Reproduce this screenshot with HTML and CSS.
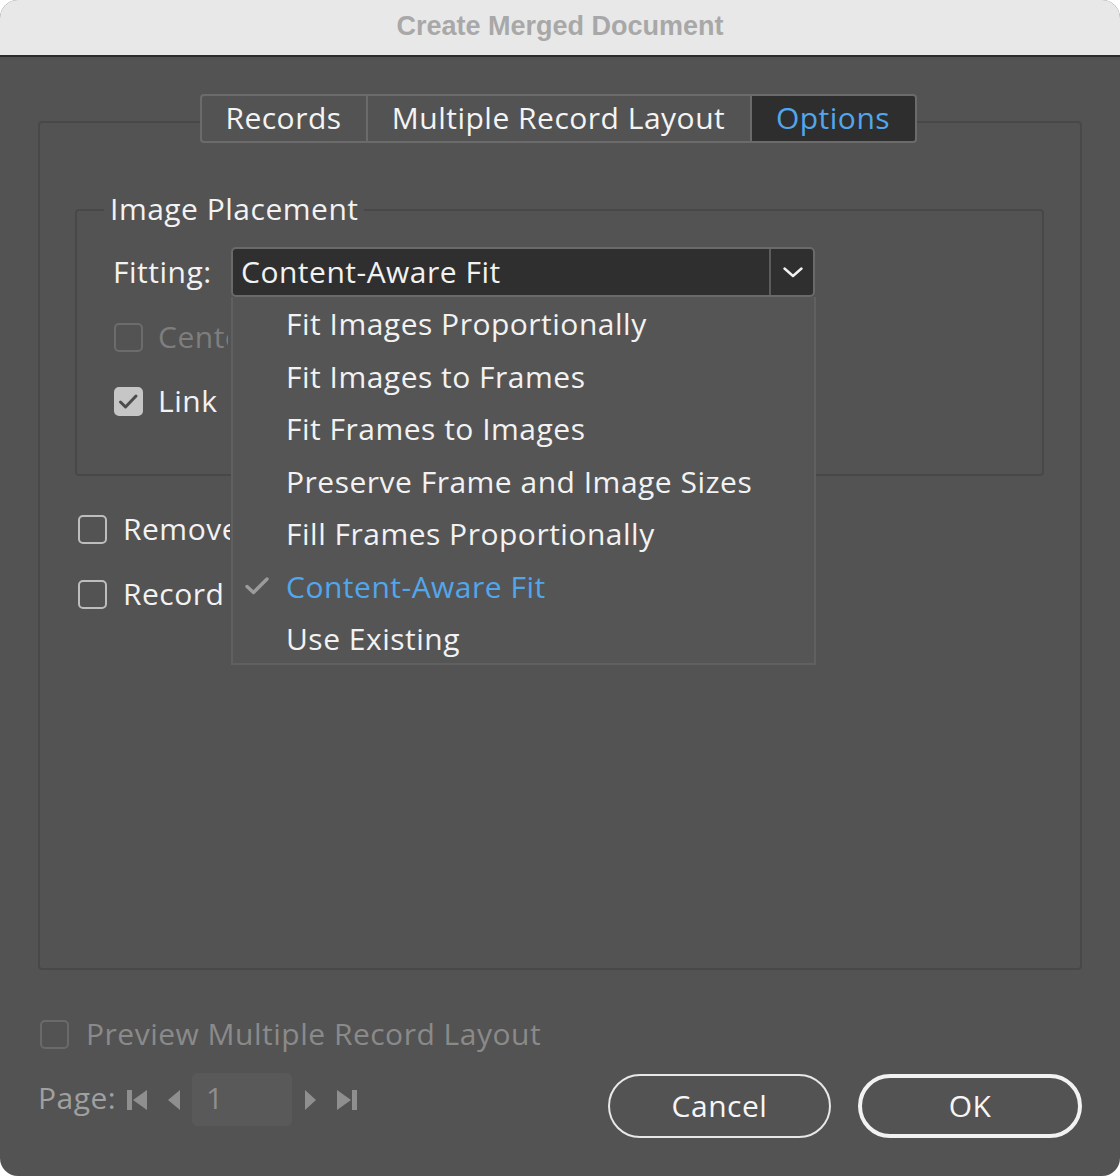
FILE: index.html
```html
<!DOCTYPE html>
<html>
<head>
<meta charset="utf-8">
<title>Create Merged Document</title>
<link rel="stylesheet" href="styles.css">
</head>
<body>
<div class="window">
  <div class="titlebar">Create Merged Document</div>
  <div class="content">
    <div class="panel">
      <div class="tabs">
        <div class="tab tab-records">Records</div>
        <div class="tab tab-layout">Multiple Record Layout</div>
        <div class="tab tab-options active">Options</div>
      </div>
      <div class="group">
        <div class="legend">Image Placement</div>
        <div class="fit-row">
          <span class="fit-label">Fitting:</span>
          <div class="select-wrap">
            <div class="select">
              <span class="select-value">Content-Aware Fit</span>
              <span class="select-arrow">
                <svg width="20" height="11" viewBox="0 0 20 11"><path d="M1.5 1.5 L10 9 L18.5 1.5" fill="none" stroke="#f2f2f2" stroke-width="2.4" stroke-linecap="round" stroke-linejoin="round"/></svg>
              </span>
            </div>
            <ul class="menu">
              <li class="menu-item">Fit Images Proportionally</li>
              <li class="menu-item">Fit Images to Frames</li>
              <li class="menu-item">Fit Frames to Images</li>
              <li class="menu-item">Preserve Frame and Image Sizes</li>
              <li class="menu-item">Fill Frames Proportionally</li>
              <li class="menu-item selected">
                <svg class="menu-check" width="24" height="18" viewBox="0 0 24 18"><path d="M2 9.5 L8.5 15.5 L22 2" fill="none" stroke="#9b9b9b" stroke-width="3.4" stroke-linecap="round" stroke-linejoin="round"/></svg>
                Content-Aware Fit
              </li>
              <li class="menu-item">Use Existing</li>
            </ul>
          </div>
        </div>
        <div class="check-row inset row-center disabled">
          <span class="cb"></span><span class="cb-text">Center in Frame</span>
        </div>
        <div class="check-row inset row-link">
          <span class="cb checked">
            <svg width="25" height="25" viewBox="0 0 25 25"><path d="M4.5 13 L9.5 18 L20 7" fill="none" stroke="#4c4c4c" stroke-width="3" stroke-linecap="round" stroke-linejoin="round"/></svg>
          </span><span class="cb-text">Link Images</span>
        </div>
      </div>
      <div class="check-row outer row-remove">
        <span class="cb"></span><span class="cb-text">Remove Blank Lines for Empty Fields</span>
      </div>
      <div class="check-row outer row-record">
        <span class="cb"></span><span class="cb-text">Record Limit per Document:</span>
      </div>
    </div>
    <div class="check-row preview-row disabled">
      <span class="cb"></span><span class="cb-text">Preview Multiple Record Layout</span>
    </div>
    <div class="footer">
      <div class="pager">
        <span class="pager-label">Page:</span>
        <svg class="nav nav-first" width="21" height="20" viewBox="0 0 21 20"><rect x="0" y="0" width="5" height="20" fill="#8f8f8f"/><polygon points="6,10 20,0 20,20" fill="#8f8f8f"/></svg>
        <svg class="nav nav-prev" width="12" height="20" viewBox="0 0 12 20"><polygon points="0,10 12,0 12,20" fill="#8f8f8f"/></svg>
        <div class="page-input">1</div>
        <svg class="nav nav-next" width="11" height="20" viewBox="0 0 11 20"><polygon points="0,0 11,10 0,20" fill="#8f8f8f"/></svg>
        <svg class="nav nav-last" width="21" height="20" viewBox="0 0 21 20"><polygon points="0,0 14,10 0,20" fill="#8f8f8f"/><rect x="15" y="0" width="5" height="20" fill="#8f8f8f"/></svg>
      </div>
      <div class="buttons">
        <div class="btn btn-cancel">Cancel</div>
        <div class="btn btn-ok">OK</div>
      </div>
    </div>
  </div>
</div>
</body>
</html>
```

FILE: styles.css
```css
* { box-sizing: border-box; }
html, body { margin: 0; padding: 0; background: #ffffff; }
body { width: 1120px; height: 1176px; overflow: hidden; }

.window {
  width: 1120px;
  height: 1176px;
  border-radius: 18px;
  overflow: hidden;
  background: #535353;
  font-family: "Open Sans", "Noto Sans", sans-serif;
  font-size: 30px;
  letter-spacing: 0.5px;
  color: #f2f2f2;
}

.titlebar {
  height: 57px;
  background: #e8e8e8;
  border-bottom: 2px solid #2b2b2b;
  display: flex;
  align-items: center;
  justify-content: center;
  font-family: "Liberation Sans", Arial, sans-serif;
  font-weight: bold;
  font-size: 27px;
  letter-spacing: 0;
  color: #a8a8a8;
  padding-bottom: 2px;
}

.content {
  padding: 0 38px;
}

.panel {
  margin-top: 64px;
  height: 849px;
  border: 2px solid #484848;
  border-radius: 4px;
}

.tabs {
  display: flex;
  justify-content: center;
  margin-top: -29px;
  height: 49px;
  margin-left: -4px;
}
.tab {
  height: 49px;
  display: flex;
  align-items: center;
  justify-content: center;
  border: 2px solid #6b6b6b;
  background: #535353;
  color: #f4f4f4;
  padding-bottom: 2px;
}
.tab-records { width: 166px; border-radius: 4px 0 0 4px; border-right: none; }
.tab-layout { width: 386px; }
.tab-options { width: 165px; border-left: none; border-radius: 0 4px 4px 0; }
.tab.active { background: #2e2e2e; color: #52a6ec; }

.group {
  margin: 66px 36px 0 35px;
  height: 267px;
  border: 2px solid #484848;
  border-radius: 4px;
}
.legend {
  display: block;
  width: max-content;
  margin-top: -19px;
  margin-left: 27px;
  height: 34px;
  line-height: 34px;
  padding: 0 6px;
  background: #535353;
}

.fit-row {
  display: flex;
  align-items: center;
  margin-top: 21px;
  padding-left: 36px;
  height: 50px;
}
.fit-label { width: 118px; padding-bottom: 2px; }
.select-wrap { position: relative; width: 584px; }
.select {
  height: 50px;
  display: flex;
  background: #2f2f2f;
  border: 2px solid #6a6a6a;
  border-radius: 5px;
}
.select-value {
  flex: 1;
  padding-left: 8px;
  display: flex;
  align-items: center;
  padding-bottom: 2px;
}
.select-arrow {
  width: 44px;
  border-left: 2px solid #5c5c5c;
  display: flex;
  align-items: center;
  justify-content: center;
  padding-left: 2px;
}

.menu {
  position: absolute;
  top: 50px;
  left: 0;
  width: 585px;
  height: 368px;
  margin: 0;
  padding: 2px 0 0 0;
  list-style: none;
  background: #555555;
  border: 2px solid #606060;
  border-top: none;
  z-index: 5;
}
.menu-item {
  position: relative;
  height: 52.5px;
  line-height: 50px;
  padding-left: 53px;
  white-space: nowrap;
}
.menu-item.selected { color: #52a6ec; }
.menu-check {
  position: absolute;
  left: 12px;
  top: 15px;
}

.check-row {
  display: flex;
  align-items: center;
  height: 40px;
  white-space: nowrap;
}
.cb {
  width: 29px;
  height: 29px;
  border: 2px solid #bdbdbd;
  border-radius: 5px;
  flex: none;
  display: flex;
  align-items: center;
  justify-content: center;
}
.cb.checked {
  background: #c6c6c6;
  border-color: #c6c6c6;
}
.cb-text { padding-bottom: 2px; }

.inset { padding-left: 37px; }
.inset .cb-text { margin-left: 15px; width: 70px; overflow: hidden; }
.row-center { margin-top: 20px; }
.row-link { margin-top: 24px; }

.disabled { color: #7e7e7e; }
.disabled .cb { border-color: #6c6c6c; }

.outer { padding-left: 38px; }
.outer .cb-text { margin-left: 16px; width: 107px; overflow: hidden; }
.row-remove { margin-top: 33px; }
.row-record { margin-top: 25px; }

.preview-row { margin-top: 44px; padding-left: 2px; color: #8a8a8a; }
.preview-row .cb { border-color: #6a6a6a; }
.preview-row .cb-text { margin-left: 17px; }

.footer {
  display: flex;
  justify-content: space-between;
  align-items: flex-start;
  margin-top: 20px;
}
.pager {
  display: flex;
  align-items: center;
  height: 53px;
  margin-top: -1px;
  color: #a0a0a0;
}
.pager-label { width: 89px; padding-bottom: 4px; }
.nav { flex: none; }
.nav-prev { margin-left: 20px; }
.page-input {
  margin-left: 12px;
  width: 100px;
  height: 53px;
  background: #595959;
  border-radius: 5px;
  padding-left: 14px;
  line-height: 50px;
  color: #8e8e8e;
}
.nav-next { margin-left: 13px; }
.nav-last { margin-left: 21px; }

.buttons { display: flex; gap: 27px; }
.btn {
  height: 64px;
  display: flex;
  align-items: center;
  justify-content: center;
  border-radius: 32px;
  color: #f6f6f6;
  padding-bottom: 2px;
}
.btn-cancel { width: 223px; border: 2px solid #e8e8e8; }
.btn-ok { width: 224px; border: 4px solid #f2f2f2; }
```
